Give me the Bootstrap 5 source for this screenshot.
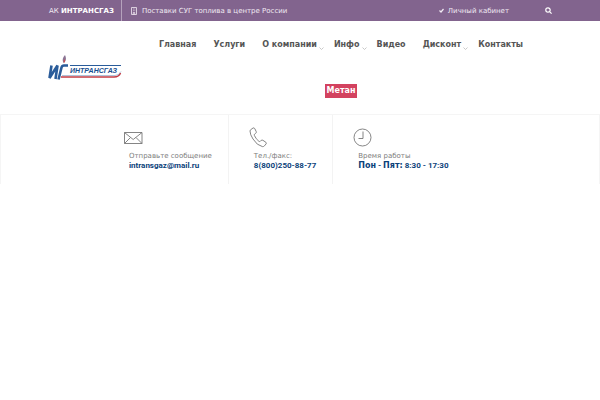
<!DOCTYPE html>
<html lang="ru">
<head>
<meta charset="utf-8">
<meta name="viewport" content="width=device-width, initial-scale=1">
<title>АК ИНТРАНСГАЗ</title>
<link href="https://cdn.jsdelivr.net/npm/bootstrap@5.3.0/dist/css/bootstrap.min.css" rel="stylesheet">
<style>
body{font-family:"DejaVu Sans",sans-serif;font-size:7px;line-height:10px;color:#7d7d7d;background:#fff}
a{color:inherit;text-decoration:none}
.topbar{background:#82648e;color:#f1eaf3;height:21px;padding:0 48px 0 49px}
.topbar .brand-name{padding-right:7px;border-right:1px solid #b5a2bc}
.topbar .account{margin-right:36px}
.search-btn{line-height:0;color:#fff}
.header-main{padding:0 48px;min-height:93px}
.logo{width:74px;margin-top:34px}
.main-menu{padding:4px 0 0;margin-left:33px;margin-right:25px;column-gap:17px}
.main-menu a{font-size:8px;font-weight:700;color:#555;line-height:40px;white-space:nowrap}
.main-menu svg{right:-7px;top:22px}
.main-menu a.promo{background:#d3425f;color:#fff;line-height:14px;padding:0 2px;margin-top:19px}
.contacts{border:1px solid #f5f5f5;border-bottom:0;padding-left:103px}
.contact{height:69px;padding:12px 16px 0 25px;border-right:1px solid #f3f3f3}
.contact:last-child{border-right:0}
.contact svg{display:block;margin-left:-5px}
.contact .caption{margin-top:2px}
.contact strong{display:block;color:#0b427a;font-size:8px;line-height:9px;font-family:Roboto,sans-serif}
.contact .cyr{font-family:"DejaVu Sans",sans-serif}
</style>
<script src="https://cdn.jsdelivr.net/npm/bootstrap@5.3.0/dist/js/bootstrap.bundle.min.js"></script>
</head>
<body>
<div class="topbar d-flex align-items-center">
  <div class="brand-name align-self-stretch d-flex align-items-center"><span>АК <b class="text-white">ИНТРАНСГАЗ</b></span></div>
  <svg class="ms-2" width="8" height="8" viewBox="0 0 8 8" fill="none" stroke="currentColor" stroke-width=".8"><path d="M1.500.5h5v7h-5zM3 2h.7M4.500 2h.7M3 3.700h.7M4.500 3.700h.7M3.300 7.500v-2h1.400v2"/></svg>
  <span class="ms-1">Поставки СУГ топлива в центре России</span>
  <a class="account ms-auto d-flex align-items-center" href="#"><svg class="me-1" width="5" height="5" viewBox="0 0 5 5" fill="none" stroke="currentColor" stroke-width="1.200"><path d="M.5 2.500 2 4 4.500 1"/></svg>Личный кабинет</a>
  <button class="search-btn border-0 bg-transparent p-0" type="button" aria-label="Поиск"><svg width="7" height="7" viewBox="0 0 7 7" fill="none" stroke="currentColor" stroke-width="1.200"><circle cx="3" cy="3" r="2.200"/><path d="m4.600 4.600 2 2"/></svg></button>
</div>
<header class="header-main d-flex align-items-start">
  <a class="logo flex-shrink-0" href="#" aria-label="ИНТРАНСГАЗ">
    <svg class="d-block" width="74" height="26" viewBox="0 0 74 26">
      <g fill="none" stroke="#2a5c9a" stroke-width="2.600"><path d="M3.500 10.500 1.500 23 9.500 10.500 7.500 24"/><path d="M10.500 24.500 13.500 12.500Q14 10.500 16 10.500H20"/></g>
      <path d="M17 0c-2.500 3-3 5-1.500 8 2.800-2 3-4.500 1.500-8z" fill="#8b7594"/><path d="M16.500 4c-1 1.500-1 2.500-.5 4 1-1 1.200-2.500.5-4z" fill="#d84a48"/>
      <path d="M22 10.500H73" stroke="#2a5c9a" stroke-width="1"/>
      <path d="M13 22H66q5 0 6.500-4" stroke="#c33c44" stroke-width="1.500" fill="none"/><path d="M14 20.500h53q4 0 6-4" stroke="#7b9ac0" stroke-width=".6" fill="none"/>
      <text x="22" y="18" font-family="Liberation Sans, sans-serif" font-size="7" font-weight="700" font-style="italic" fill="#194f91">ИНТРАНСГАЗ</text>
    </svg>
  </a>
  <nav class="flex-grow-1" aria-label="Меню">
    <ul class="main-menu list-unstyled d-flex flex-wrap justify-content-center mb-0">
      <li><a href="#">Главная</a></li>
      <li><a href="#">Услуги</a></li>
      <li class="position-relative"><a href="#">О компании</a><svg class="position-absolute" width="5" height="4" viewBox="0 0 5 4" fill="none" stroke="#bbb" stroke-width=".8"><path d="m.5.5 2 2 2-2"/></svg></li>
      <li class="position-relative"><a href="#">Инфо</a><svg class="position-absolute" width="5" height="4" viewBox="0 0 5 4" fill="none" stroke="#bbb" stroke-width=".8"><path d="m.5.5 2 2 2-2"/></svg></li>
      <li><a href="#">Видео</a></li>
      <li class="position-relative"><a href="#">Дисконт</a><svg class="position-absolute" width="5" height="4" viewBox="0 0 5 4" fill="none" stroke="#bbb" stroke-width=".8"><path d="m.5.5 2 2 2-2"/></svg></li>
      <li><a href="#">Контакты</a></li>
      <li><a class="promo d-block" href="#">Метан</a></li>
    </ul>
  </nav>
</header>
<section class="contacts d-flex">
  <div class="contact">
    <svg width="20" height="22" viewBox="0 0 20 22" fill="none" stroke="#777" stroke-width=".9"><path d="M.5 5.500h17.500v11H.5zM.5 5.500l8.700 7 8.800-7M.5 16.500l6-6M18 16.500l-6-6"/></svg>
    <div class="caption">Отправьте сообщение</div>
    <strong><a href="#">intransgaz@mail.ru</a></strong>
  </div>
  <div class="contact">
    <svg width="20" height="22" viewBox="0 0 20 22" fill="none" stroke="#777" stroke-width=".9"><path d="M2 2.500 4 1q1-.5 1.700.5l1.500 3q.5 1-.5 1.800l-1 .7q-.7.600-.3 1.500 1.500 3.500 4.500 5.800.8.600 1.500-.1l.8-.8q.8-.7 1.700-.1l3 2q.9.700.2 1.600l-1.700 2q-.8.900-2 .7Q8 18.500 4 12 1 7.500 1 4q0-1 1-1.500z"/></svg>
    <div class="caption">Тел./факс:</div>
    <strong>8(800)250-88-77</strong>
  </div>
  <div class="contact">
    <svg width="20" height="22" viewBox="0 0 20 22" fill="none" stroke="#777" stroke-width=".9"><circle cx="9.500" cy="10.500" r="8.500"/><path d="M10 4.500v7H5.500"/></svg>
    <div class="caption">Время работы</div>
    <strong><span class="cyr">Пон</span> - <span class="cyr">Пят:</span> 8:30 - 17:30</strong>
  </div>
</section>
</body>
</html>
